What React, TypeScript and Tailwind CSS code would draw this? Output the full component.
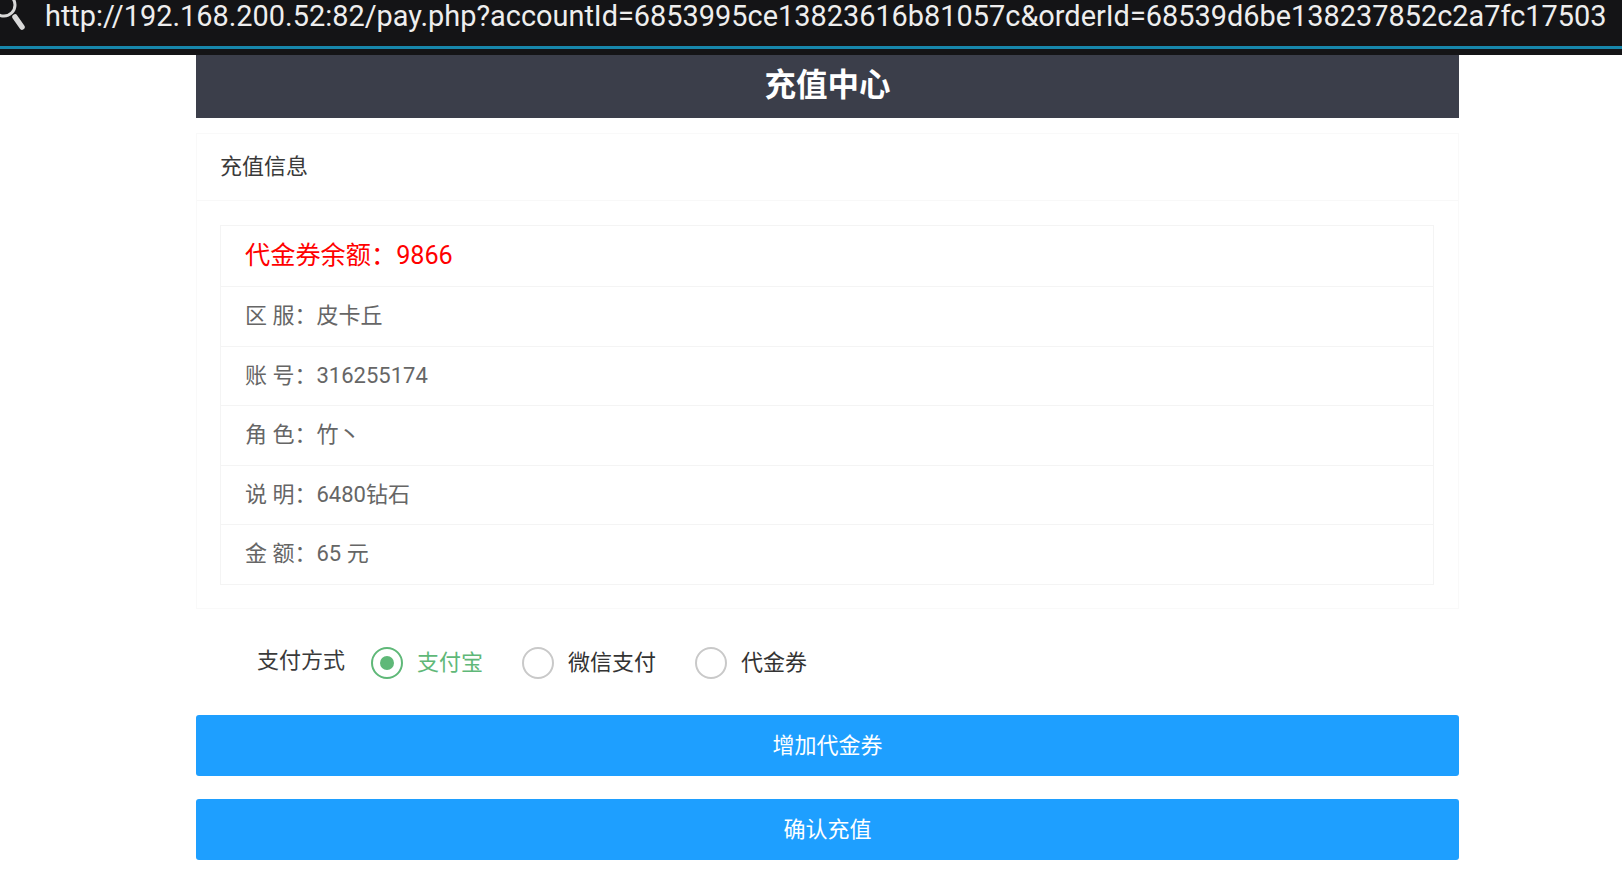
const cjk = "font-['Roboto','Noto_Sans_CJK_SC',sans-serif]"
const colon = "\uFF1A"

const rows = [
  ["区 服", "皮卡丘"],
  ["账 号", "316255174"],
  ["角 色", "竹丶"],
  ["说 明", "6480钻石"],
  ["金 额", "65 元"],
]

function Radio({ label, checked, className }: { label: string; checked?: boolean; className?: string }) {
  return (
    <div className={`flex items-center gap-[14px] ${className ?? ""}`}>
      <span
        className={`flex size-[32px] items-center justify-center rounded-full border-2 ${
          checked ? "border-[#5fb878]" : "border-[#c9c9c9]"
        }`}
      >
        {checked && <span className="size-[14px] rounded-full bg-[#5fb878]" />}
      </span>
      <span className={`text-[22px] ${checked ? "text-[#5fb878]" : "text-[#333]"}`}>{label}</span>
    </div>
  )
}

export default function App() {
  return (
    <div className={`h-[870px] overflow-hidden bg-white ${cjk}`}>
      {/* browser address bar */}
      <div className="relative h-[55px] overflow-hidden bg-[#141416]">
        <svg className="absolute left-0 top-0" width="30" height="34" viewBox="0 0 30 34" fill="none">
          <circle cx="4" cy="5" r="11" stroke="#d8d8d8" strokeWidth="3" />
          <path d="M15 17 L22 27" stroke="#d8d8d8" strokeWidth="5.5" strokeLinecap="round" />
        </svg>
        <div className="relative h-[46px] whitespace-nowrap pl-[45px] text-[28.9px] leading-[32px] text-[#eeeeee]">
          http://192.168.200.52:82/pay.php?accountId=6853995ce13823616b81057c&amp;orderId=68539d6be138237852c2a7fc17503
        </div>
        <div className="h-[3px] bg-[#1787ab]" />
      </div>

      <div className="ml-[196px] w-[1263px]">
        <div className="flex h-[63px] items-center justify-center bg-[#3b3e4a] pb-[2px] text-[31.5px] font-bold text-white">
          充值中心
        </div>

        <div className="mt-[15px] border border-[#f9f9f9]">
          <div className="flex h-[67px] items-center border-b border-[#f8f8f8] pb-[1px] pl-[23px] text-[22px] text-[#3a3a3a]">
            充值信息
          </div>
          <div className="pb-[23px] pl-[23px] pr-[24px] pt-[24px]">
            <div className="border border-[#f4f4f4]">
              <div className="flex h-[60px] items-center pb-[1px] pl-[24px] text-[25.2px] text-[#ff0000]">
                代金券余额{colon}9866
              </div>
              {rows.map(([k, v]) => (
                <div key={k} className="flex h-[59.5px] items-center border-t border-[#f4f4f4] pb-[1px] pl-[24px] text-[22px] text-[#666]">
                  <span>{k}{colon}</span>
                  <span>{v}</span>
                </div>
              ))}
            </div>
          </div>
        </div>

        <div className="mt-[38px] flex h-[32px] items-center pl-[61px]">
          <span className="pb-[4px] text-[22px] text-[#3a3a3a]">支付方式</span>
          <Radio label="支付宝" checked className="ml-[26px]" />
          <Radio label="微信支付" className="ml-[39px]" />
          <Radio label="代金券" className="ml-[39px]" />
        </div>

        <div className="mt-[36px] flex flex-col gap-[23px]">
          <button className="h-[61px] rounded-[3px] bg-[#1e9fff] text-[22px] text-white">增加代金券</button>
          <button className="h-[61px] rounded-[3px] bg-[#1e9fff] text-[22px] text-white">确认充值</button>
        </div>
      </div>
    </div>
  )
}
